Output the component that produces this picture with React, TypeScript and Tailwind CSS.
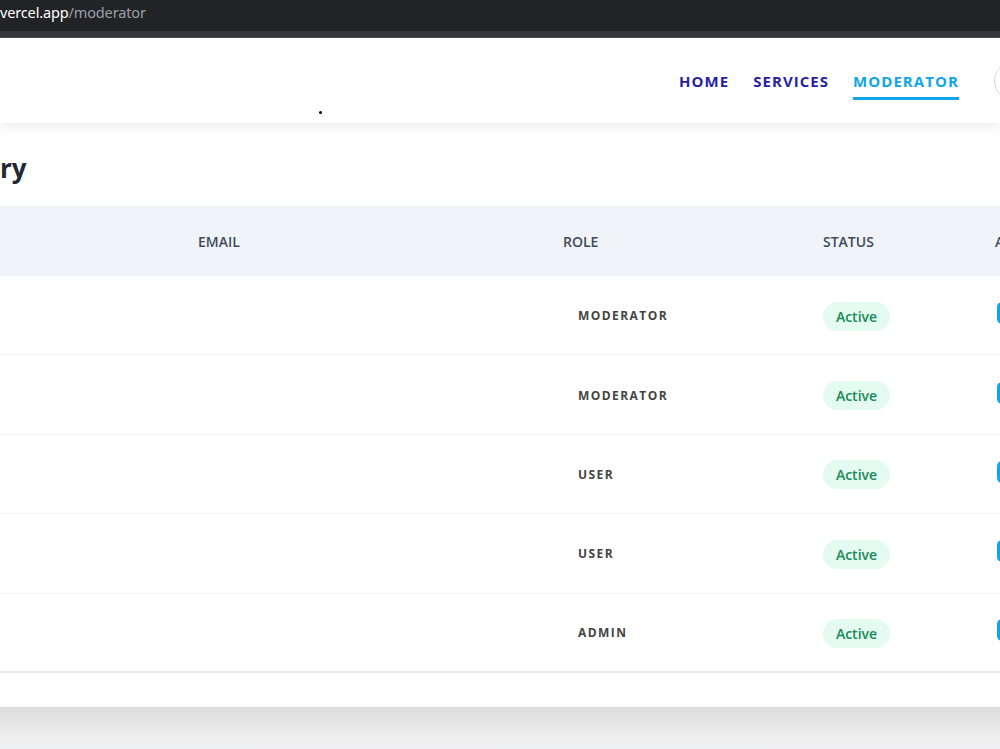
import React from "react";

const rows = [
  { role: "MODERATOR" },
  { role: "MODERATOR" },
  { role: "USER" },
  { role: "USER" },
  { role: "ADMIN" },
];

const cols = "grid grid-cols-[198px_365px_260px_172px_200px] w-[1195px]";

export default function App() {
  return (
    <div className="w-[1000px] h-[749px] overflow-hidden bg-white flex flex-col font-['Open_Sans',sans-serif]">
      {/* browser bar */}
      <div className="shrink-0 flex flex-col">
        <div className="h-[31px] bg-[#222326] flex items-center">
          <span className="text-[14.5px] tracking-[-0.01em] leading-none -mt-[7px] font-['Noto_Sans',sans-serif]">
            <span className="text-white">vercel.app</span>
            <span className="text-[#9aa0a6]">/moderator</span>
          </span>
        </div>
        <div className="h-[7px] bg-[#33363b] border-b border-[#4a4d52]" />
      </div>

      {/* navbar */}
      <div className="relative shrink-0 h-[85px] bg-white shadow-[0_6px_10px_rgba(0,0,0,0.06)] z-10 flex items-center">
        <span className="absolute left-[319px] top-[73px] w-[3px] h-[3px] rounded-full bg-black" />
        <div className="flex items-center pl-[679px] gap-[24px] w-[1080px] shrink-0">
          <span className="text-[15px] font-bold tracking-[0.07em] text-[#2a1fa3] leading-none pt-[2px] pb-[8px] border-b-[3px] border-transparent mt-[10px]">
            HOME
          </span>
          <span className="text-[15px] font-bold tracking-[0.07em] text-[#2a1fa3] leading-none pt-[2px] pb-[8px] border-b-[3px] border-transparent mt-[10px]">
            SERVICES
          </span>
          <span className="text-[15px] font-bold tracking-[0.07em] text-[#0ea5e9] leading-none pt-[2px] pb-[8px] border-b-[3px] border-[#0ea5e9] mt-[10px]">
            MODERATOR
          </span>
          <span className="ml-[11px] w-[40px] h-[40px] rounded-full border border-[#d6d6d6] bg-white shrink-0" />
        </div>
      </div>

      {/* content */}
      <div className="flex flex-col pt-[27px]">
        <h1 className="text-[26px] leading-[36px] font-bold text-[#1f2937]">ry</h1>

        <div className="mt-[20px] bg-white flex flex-col">
          {/* header */}
          <div className={`${cols} h-[70px] bg-[#f0f4f9] items-center text-[14px] font-semibold text-[#3f4a5c]`}>
            <span />
            <span>EMAIL</span>
            <span>ROLE</span>
            <span>STATUS</span>
            <span>ACTIONS</span>
          </div>

          {rows.map((r, i) => (
            <div
              key={i}
              className={`${cols} h-[79.4px] items-center pt-[2px] ${
                i === rows.length - 1 ? "border-b-2 border-[#e6ebf3]" : "border-b border-[#eef1f6]"
              }`}
            >
              <span />
              <span />
              <span className="pl-[15px] text-[12px] font-bold tracking-[0.12em] text-[#444444]">{r.role}</span>
              <span>
                <span className="inline-flex items-center justify-center w-[67px] h-[29px] rounded-full bg-[#e3fbf0] text-[14px] font-semibold text-[#178a56]">
                  Active
                </span>
              </span>
              <span className="pl-[2px]">
                <span className="inline-block w-[60px] h-[22px] rounded-[5px] bg-[#0ea5e9]" />
              </span>
            </div>
          ))}

          <div className="h-[34px] bg-white" />
        </div>

        <div className="h-[60px] bg-gradient-to-b from-[#dcdcdc] via-[#eeeeef] to-[#f3f4f6]" />
      </div>
    </div>
  );
}
